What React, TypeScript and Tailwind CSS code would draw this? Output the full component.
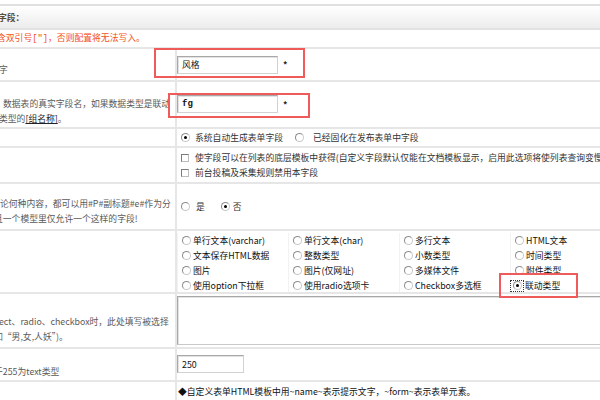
import React from "react";

function Radio({ checked = false, focus = false }: { checked?: boolean; focus?: boolean }) {
  const dot = (
    <span className="flex items-center justify-center w-[9px] h-[9px] rounded-full border border-[#8c8c8c] border-r-[#c8c8c8] border-b-[#c8c8c8] bg-white shrink-0">
      {checked && <span className="w-[3px] h-[3px] rounded-full bg-black" />}
    </span>
  );
  if (focus) {
    return (
      <span className="flex items-center justify-center w-[14px] h-[12px] border border-dotted border-[#333] shrink-0">
        {dot}
      </span>
    );
  }
  return dot;
}

function Checkbox() {
  return <span className="w-[8px] h-[8px] border border-[#7a7a7a] border-r-[#bcbcbc] border-b-[#bcbcbc] bg-white shrink-0" />;
}

function Input({ w, value, mono = false }: { w: string; value: string; mono?: boolean }) {
  return (
    <div
      className={`${w} h-[18px] border border-[#a8a8a8] border-r-[#d2d2d2] border-b-[#d2d2d2] shadow-[inset_1px_1px_0_#e2e2e2] flex items-center pl-[4px] text-[#111] shrink-0 ${
        mono ? "font-['Liberation_Mono',monospace] font-bold text-[9px]" : ""
      }`}
    >
      {value}
    </div>
  );
}

const cells: { t: string; checked?: boolean }[][] = [
  [{ t: "单行文本(varchar)" }, { t: "单行文本(char)" }, { t: "多行文本" }, { t: "HTML文本" }],
  [{ t: "文本保存HTML数据" }, { t: "整数类型" }, { t: "小数类型" }, { t: "时间类型" }],
  [{ t: "图片" }, { t: "图片(仅网址)" }, { t: "多媒体文件" }, { t: "附件类型" }],
  [{ t: "使用option下拉框" }, { t: "使用radio选项卡" }, { t: "Checkbox多选框" }, { t: "联动类型", checked: true }],
];

export default function App() {
  const rowB = "flex border-b-2 border-[#e6e6e6]";
  const leftC = "w-[177px] shrink-0 border-r-2 border-[#e6e6e6] overflow-hidden whitespace-nowrap text-[#5a5a5a]";
  const rightC = "flex-1 min-w-0 overflow-hidden whitespace-nowrap";
  return (
    <div className="relative w-[600px] h-[400px] overflow-hidden bg-white font-['Noto_Sans_CJK_SC','Liberation_Sans',sans-serif] text-[8.8px] leading-[15px] text-[#222]">
      <div className="h-[4px]" />
      {/* header */}
      <div className="h-[26px] border-t-2 border-b-2 border-t-[#e0e0e0] border-b-[#e2e2e2] bg-linear-to-b from-[#ffffff] to-[#ececec] flex items-center overflow-hidden whitespace-nowrap">
        <span className="-ml-[2px] font-bold text-[#5b4d36]">字段：</span>
      </div>
      {/* red note */}
      <div className="h-[19px] border-b-2 border-[#e6e6e6] flex items-center overflow-hidden whitespace-nowrap">
        <span className="-ml-[3px] text-[#f2501e]">
          含双引号<span className="font-['Liberation_Mono',monospace]">["]</span>，否则配置将无法写入。
        </span>
      </div>
      {/* row 1 */}
      <div className={`${rowB} h-[33px]`}>
        <div className={`${leftC} pt-[13px]`}>
          <div className="-ml-[1px]">字</div>
        </div>
        <div className={`${rightC} flex items-center`}>
          <Input w="w-[101px]" value="风格" />
          <span className="ml-[5px] font-bold text-[#222]">*</span>
        </div>
      </div>
      {/* row 2 */}
      <div className={`${rowB} h-[47px]`}>
        <div className={`${leftC} pt-[14px]`}>
          <div className="pl-[3px]">数据表的真实字段名，如果数据类型是联动</div>
          <div className="-ml-[1px]">
            类型的<span className="underline text-[#222]">[组名称]</span>。
          </div>
        </div>
        <div className={`${rightC} flex items-start pt-[13px]`}>
          <Input w="w-[101px]" value="fg" mono />
          <span className="ml-[5px] mt-[2px] font-bold text-[#222]">*</span>
        </div>
      </div>
      {/* row 3 */}
      <div className={`${rowB} h-[19px]`}>
        <div className={leftC} />
        <div className={`${rightC} flex items-center pl-[4px] text-[#333]`}>
          <Radio checked />
          <span className="ml-[5px]">系统自动生成表单字段</span>
          <span className="ml-[12px]">
            <Radio />
          </span>
          <span className="ml-[9px]">已经固化在发布表单中字段</span>
        </div>
      </div>
      {/* row 4 */}
      <div className={`${rowB} h-[36px]`}>
        <div className={leftC} />
        <div className={`${rightC} flex flex-col justify-center text-[#333]`}>
          <div className="flex items-center h-[15px] pl-[4px]">
            <Checkbox />
            <span className="ml-[6px]">
              使字段可以在列表的底层模板中获得(自定义字段默认仅能在文档模板显示，启用此选项将使列表查询变慢)
            </span>
          </div>
          <div className="flex items-center h-[15px] pl-[4px]">
            <Checkbox />
            <span className="ml-[6px]">前台投稿及采集规则禁用本字段</span>
          </div>
        </div>
      </div>
      {/* row 5 */}
      <div className={`${rowB} h-[47px]`}>
        <div className={`${leftC} pt-[12px]`}>
          <div>论何种内容，都可以用#P#副标题#e#作为分</div>
          <div className="-ml-[6px]">且一个模型里仅允许一个这样的字段!</div>
        </div>
        <div className={`${rightC} flex items-center pl-[4px] text-[#333]`}>
          <Radio />
          <span className="ml-[6px]">是</span>
          <span className="ml-[16px]">
            <Radio checked />
          </span>
          <span className="ml-[3px]">否</span>
        </div>
      </div>
      {/* row 6 */}
      <div className={`${rowB} h-[63px]`}>
        <div className={leftC} />
        <div className={`${rightC} pt-[2px] text-[#111]`}>
          {cells.map((r, i) => (
            <div key={i} className="grid grid-cols-[111px_111px_111px_111px] h-[15px]">
              {r.map((c, j) =>
                c.checked ? (
                  <div key={j} className="flex items-center">
                    <Radio checked focus />
                    <span className="ml-[1px]">{c.t}</span>
                  </div>
                ) : (
                  <div key={j} className="flex items-center pl-[4px] border-l border-[#f2f2f2]">
                    <Radio />
                    <span className="ml-[2px]">{c.t}</span>
                  </div>
                )
              )}
            </div>
          ))}
        </div>
      </div>
      {/* row 7 */}
      <div className={`${rowB} h-[55px]`}>
        <div className={`${leftC} pt-[20px]`}>
          <div className="-ml-[1px]">ect、radio、checkbox时，此处填写被选择</div>
          <div className="-ml-[6px]">如“男,女,人妖”)。</div>
        </div>
        <div className={`${rightC} pt-[2px]`}>
          <div className="w-[460px] h-[49px] border border-[#a8a8a8] border-r-[#d2d2d2] border-b-[#c8c8c8] shadow-[inset_1px_1px_0_#e2e2e2]" />
        </div>
      </div>
      {/* row 8 */}
      <div className={`${rowB} h-[33px]`}>
        <div className={`${leftC} pt-[15px]`}>
          <div className="-ml-[6px]">于255为text类型</div>
        </div>
        <div className={`${rightC} pt-[6px]`}>
          <Input w="w-[67px]" value="250" />
        </div>
      </div>
      {/* row 9 */}
      <div className="flex h-[40px]">
        <div className={leftC} />
        <div className={`${rightC} pt-[2px] pl-[1px] text-[#111]`}>
          ◆自定义表单HTML模板中用~name~表示提示文字，~form~表示表单元素。
        </div>
      </div>

      {/* annotation rectangles */}
      <div className="absolute left-[154px] top-[48px] w-[151px] h-[30px] border-2 border-[#ef5a5a]" />
      <div className="absolute left-[168px] top-[93px] w-[142px] h-[25px] border-2 border-[#ef5a5a]" />
      <div className="absolute left-[499px] top-[273px] w-[79px] h-[25px] border-2 border-[#ef5a5a]" />
    </div>
  );
}
